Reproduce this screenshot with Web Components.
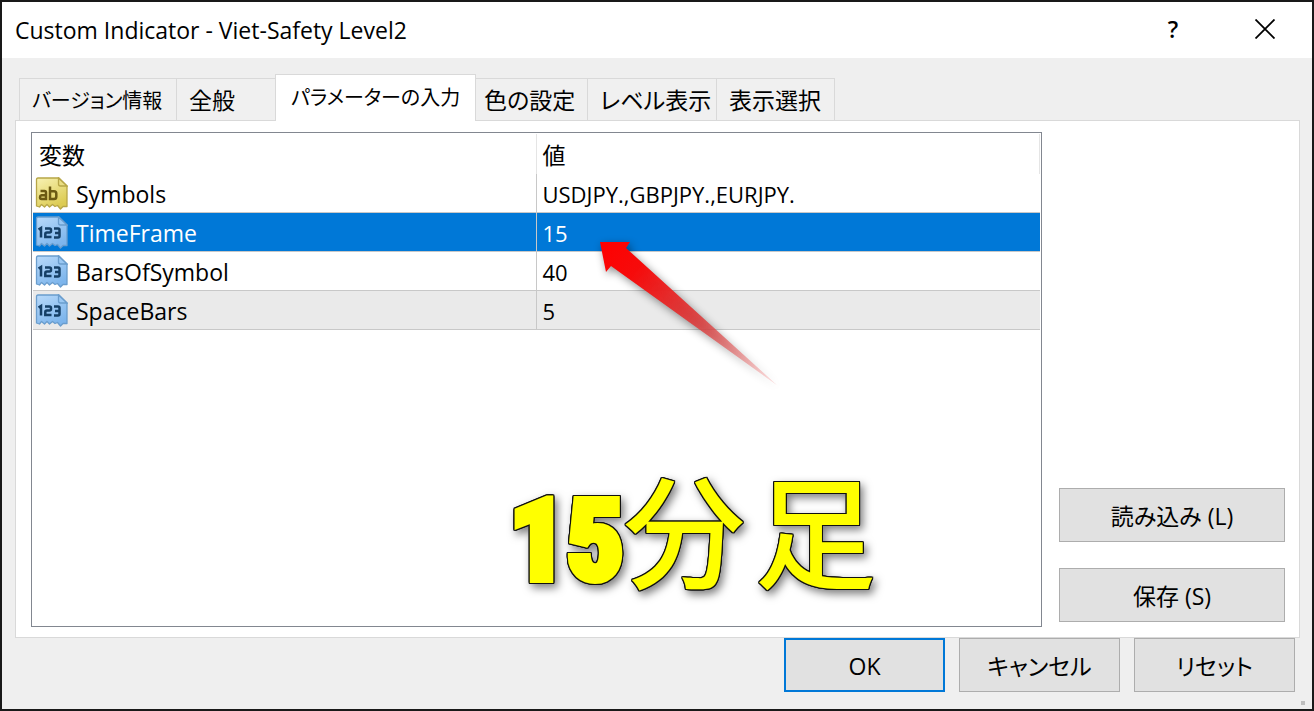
<!DOCTYPE html>
<html lang="ja">
<head>
<meta charset="utf-8">
<title>Custom Indicator</title>
<style>
  body { margin: 0; font: 23px/32px "Open Sans", "Noto Sans CJK JP", sans-serif; color: #000; }
</style>
</head>
<body>
<indicator-dialog heading="Custom Indicator - Viet-Safety Level2">
  <tab-item slot="tabs" style="--w:158px" compact>バージョン情報</tab-item>
  <tab-item slot="tabs" style="--w:100px">全般</tab-item>
  <tab-item slot="tabs" style="--w:201px" selected compact>パラメーターの入力</tab-item>
  <tab-item slot="tabs" style="--w:113px;--pad:8px">色の設定</tab-item>
  <tab-item slot="tabs" style="--w:130px">レベル表示</tab-item>
  <tab-item slot="tabs" style="--w:119px">表示選択</tab-item>
  <param-list>
    <callout-arrow></callout-arrow>
    <callout-text><span>15</span><b>分</b><b>足</b></callout-text>
  </param-list>
  <push-button slot="side">読み込み (L)</push-button>
  <push-button slot="side">保存 (S)</push-button>
  <push-button slot="footer" primary>OK</push-button>
  <push-button slot="footer">キャンセル</push-button>
  <push-button slot="footer">リセット</push-button>
</indicator-dialog>

<script>
class IndicatorDialog extends HTMLElement {
  connectedCallback() {
    this.attachShadow({ mode: "open" }).innerHTML = `
      <style>
        :host{display:flex;flex-direction:column;box-sizing:border-box;min-height:100vh;border:2px solid #191919;background:#efefef}
        header{display:flex;align-items:center;height:56px;padding-left:13px;background:#fff}
        h1{flex:1;margin:0;font:inherit}
        header button{width:92px;height:56px;padding:0 2px 2px 0;border:0;background:none;font:inherit;font-weight:600}
        header svg{display:block;margin:auto}
        nav{display:flex;align-items:flex-end;height:46px;margin:16px 17px 0}
        main{flex:1;display:flex;gap:17px;box-sizing:border-box;margin:0 12px 0 13px;padding:11px 14px 10px 15px;border:1px solid #d9d9d9;background:#fff}
        ::slotted(param-list){flex:1}
        aside{display:flex;flex-direction:column;justify-content:flex-end;gap:26px;width:226px;padding-bottom:5px}
        footer{display:flex;justify-content:flex-end;gap:14px;padding:0 17px 17px}
        footer ::slotted(*){width:161px}
        i{align-self:flex-end;width:4px;height:4px;margin:-8px 7px 4px;background:#bfbfbf}
      </style>
      <header>
        <h1>${this.getAttribute("heading")}</h1>
        <button aria-label="ヘルプ">?</button>
        <button aria-label="閉じる"><svg width="20" height="20" viewBox="0 0 20 20"><path d="M.5 .5l19 19M19.5 .5l-19 19" stroke="#000" stroke-width="1.8"/></svg></button>
      </header>
      <nav role="tablist"><slot name="tabs"></slot></nav>
      <main>
        <slot></slot>
        <aside><slot name="side"></slot></aside>
      </main>
      <footer><slot name="footer"></slot></footer>
      <i></i>
    `;
  }
}

class TabItem extends HTMLElement {
  connectedCallback() {
    const on = this.hasAttribute("selected");
    this.attachShadow({ mode: "open" }).innerHTML = `
      <style>
        :host{display:block;width:var(--w);margin-right:-1px}
        :host([compact]){font-size:20px}
        :host([selected]){position:relative;z-index:1;margin-bottom:-1px}
        button{display:block;box-sizing:border-box;width:100%;height:42px;padding:0 0 0 var(--pad,12px);border:1px solid #d9d9d9;border-bottom:0;background:#f0f0f0;color:inherit;font:inherit;font-feature-settings:"palt";text-align:left;white-space:nowrap}
        :host([compact]) button{padding-top:2px}
        :host([selected]) button{height:47px;padding:0 0 0 15px;background:#fff}
      </style>
      <button role="tab" aria-selected="${on}"><slot></slot></button>
    `;
  }
}

class PushButton extends HTMLElement {
  connectedCallback() {
    this.attachShadow({ mode: "open" }).innerHTML = `
      <style>
        :host{display:block}
        button{display:block;box-sizing:border-box;width:100%;height:54px;padding:2px 0 0;border:1px solid #adadad;background:#e1e1e1;color:inherit;font:inherit;font-feature-settings:"palt"}
        :host([primary]) button{border:2px solid #0078d7}
      </style>
      <button><slot></slot></button>
    `;
  }
}

class ParamIcon extends HTMLElement {
  connectedCallback() {
    const text = this.getAttribute("kind") === "text";
    const c = text
      ? { a: "#f8f2b4", b: "#dccb52", line: "#b7a647", ink: "#6b5a12", fold: "#e9dd83" }
      : { a: "#b9dafa", b: "#7db5ec", line: "#6a9dcd", ink: "#153f66", fold: "#9bc8f3" };
    const glyph = text
      ? `<path d="M5.500 14h4q1.500 0 1.500 1.500V22H6.500Q5 22 5 20.300T6.500 18.300H11M15 9.500V22h4q2.300 0 2.300-2.300v-3q0-2.500-2.300-2.500h-4"/>`
      : `<path d="M3.500 13.500l2.500-1.500v9.500M10 12.500h4.500q1.500 0 1.500 1.500v1q0 1.500-1.500 1.500H12q-1.700 0-1.700 1.500v3H16.500M19 12.500h4q1.500 0 1.500 1.500v6q0 1.500-1.500 1.500h-4M20 17h4"/>`;
    this.attachShadow({ mode: "open" }).innerHTML = `
      <style>
        :host{display:block;width:33px;height:33px}
        svg{display:block}
      </style>
      <svg width="33" height="33" viewBox="0 0 33 33" aria-hidden="true">
        <defs><linearGradient id="g" x2=".5" y2="1"><stop stop-color="${c.a}"/><stop offset="1" stop-color="${c.b}"/></linearGradient></defs>
        <path d="M3 1Q1.500 1 1.500 3V29l3 1 2-2.500 3 2.500 2.500-2.500 2.500 2.500 3-2.500 2.500 2 2.500-1 3 3.500 2.500-2.500h4V9l-8-8z" fill="url(#g)" stroke="${c.line}" stroke-width="1.300" stroke-linejoin="round"/>
        <path d="M23.500 1v6q0 2 2 2H32z" fill="${c.fold}" stroke="${c.line}" stroke-width="1.300"/>
        <g fill="none" stroke="${c.ink}" stroke-width="2.500">${glyph}</g>
      </svg>
    `;
  }
}

const PARAMS = [
  { name: "Symbols", value: "USDJPY.,GBPJPY.,EURJPY.", kind: "text" },
  { name: "TimeFrame", value: "15", kind: "int", cls: "sel" },
  { name: "BarsOfSymbol", value: "40", kind: "int" },
  { name: "SpaceBars", value: "5", kind: "int", cls: "alt" },
];

class ParamList extends HTMLElement {
  connectedCallback() {
    this.attachShadow({ mode: "open" }).innerHTML = `
      <style>
        :host{display:block;position:relative;box-sizing:border-box;min-height:400px;padding:1px;border:1px solid #828790}
        table{width:100%;border-collapse:separate;border-spacing:0;table-layout:fixed}
        th,td{box-sizing:border-box;height:39px;padding:2px 6px 0;border-bottom:1px solid #c8c8c8;text-align:left;font-weight:400;white-space:nowrap}
        th{height:40px;border-right:1px solid #e5e5e5;border-bottom:0}
        th:first-child{width:calc(50% - 1px)}
        td:first-child{padding:0 0 0 2px;border-right:1px solid #c8c8c8}
        td:last-child{font-size:22px}
        .sel td{background:#0078d7;color:#fff}
        .alt td{background:#eaeaea}
        .name{display:flex;align-items:center;gap:8px}
        .name span{padding-top:2px}
      </style>
      <table>
        <thead><tr><th>変数</th><th>値</th></tr></thead>
        <tbody>${PARAMS.map(
          (p) => `<tr class="${p.cls ?? ""}">
            <td><div class="name"><param-icon kind="${p.kind}"></param-icon><span>${p.name}</span></div></td>
            <td>${p.value}</td>
          </tr>`,
        ).join("")}</tbody>
      </table>
      <slot></slot>
    `;
  }
}

class CalloutArrow extends HTMLElement {
  connectedCallback() {
    this.attachShadow({ mode: "open" }).innerHTML = `
      <style>
        :host{position:absolute;left:568px;top:109px;pointer-events:none}
        svg{display:block;overflow:visible;filter:drop-shadow(2px 3px 4px rgba(0,0,0,.45))}
      </style>
      <svg width="178" height="144" viewBox="0 0 178 144">
        <defs><linearGradient id="fade" gradientUnits="userSpaceOnUse" x1="0" y1="0" x2="178" y2="144">
          <stop stop-color="#f00"/><stop offset=".2" stop-color="#f60b0b"/><stop offset=".55" stop-color="#dc3c3c" stop-opacity=".9"/><stop offset="1" stop-color="#f06060" stop-opacity=".15"/>
        </linearGradient></defs>
        <path d="M0 0H30L26 6L178 144L11 24L6 30z" fill="url(#fade)"/>
      </svg>
    `;
  }
}

class CalloutText extends HTMLElement {
  connectedCallback() {
    this.attachShadow({ mode: "open" }).innerHTML = `
      <style>
        :host{position:absolute;left:478px;top:321px;display:flex;align-items:baseline;color:#ff0;font:500 122px/144px "Noto Sans CJK JP",sans-serif;white-space:nowrap;filter:drop-shadow(1px 0 0 #111) drop-shadow(-1px 0 0 #111) drop-shadow(0 1px 0 #111) drop-shadow(0 -1px 0 #111) drop-shadow(3px 4px 4px rgba(0,0,0,.5));pointer-events:none}
        ::slotted(span){font:700 112px/144px "Liberation Sans Narrow","Roboto Condensed","DejaVu Sans Condensed",sans-serif;-webkit-text-stroke:8px #ff0}
        ::slotted(b){font-weight:500}
        ::slotted(b:last-child){margin-left:9px}
      </style>
      <slot></slot>
    `;
  }
}

customElements.define("indicator-dialog", IndicatorDialog);
customElements.define("tab-item", TabItem);
customElements.define("push-button", PushButton);
customElements.define("param-icon", ParamIcon);
customElements.define("param-list", ParamList);
customElements.define("callout-arrow", CalloutArrow);
customElements.define("callout-text", CalloutText);
</script>
</body>
</html>
